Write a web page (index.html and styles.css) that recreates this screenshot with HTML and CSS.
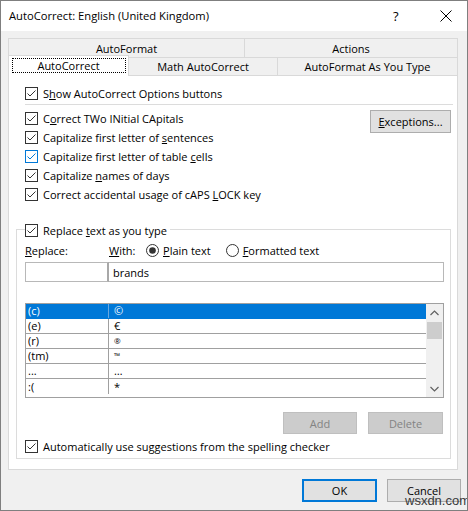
FILE: index.html
```html
<!DOCTYPE html>
<html>
<head>
<meta charset="utf-8">
<link rel="stylesheet" href="styles.css">
</head>
<body>
<div class="window">
  <div class="titlebar">
    <span class="title">AutoCorrect: English (United Kingdom)</span>
    <span class="help">?</span>
    <svg class="close" width="12" height="12" viewBox="0 0 12 12"><path d="M0.5 0.5 L11.5 11.5 M11.5 0.5 L0.5 11.5" stroke="#000" stroke-width="1" fill="none"/></svg>
  </div>
  <div class="client">
    <div class="tabrow r1">
      <div class="tab t-af">AutoFormat</div>
      <div class="tab t-act">Actions</div>
    </div>
    <div class="tabrow r2">
      <div class="tab sel t-ac"><span class="focus">AutoCorrect</span></div>
      <div class="tab t-math">Math AutoCorrect</div>
      <div class="tab t-afyt">AutoFormat As You Type</div>
    </div>
    <div class="panel">
      <div class="top">
        <label class="cbrow">
          <svg class="cb" viewBox="0 0 13 13"><rect x="0.5" y="0.5" width="12" height="12" fill="#fff" stroke="#333"/><path d="M2.5 6.5 L5 9 L10.5 3.5" fill="none" stroke="#333"/></svg>
          <span>S<u>h</u>ow AutoCorrect Options buttons</span>
        </label>
        <div class="sep"></div>
        <div class="opts">
          <div class="optlist">
            <label class="cbrow">
              <svg class="cb" viewBox="0 0 13 13"><rect x="0.5" y="0.5" width="12" height="12" fill="#fff" stroke="#333"/><path d="M2.5 6.5 L5 9 L10.5 3.5" fill="none" stroke="#333"/></svg>
              <span>C<u>o</u>rrect TWo INitial CApitals</span>
            </label>
            <label class="cbrow">
              <svg class="cb" viewBox="0 0 13 13"><rect x="0.5" y="0.5" width="12" height="12" fill="#fff" stroke="#333"/><path d="M2.5 6.5 L5 9 L10.5 3.5" fill="none" stroke="#333"/></svg>
              <span>Capitalize first letter of <u>s</u>entences</span>
            </label>
            <label class="cbrow">
              <svg class="cb" viewBox="0 0 13 13"><rect x="0.5" y="0.5" width="12" height="12" fill="#fff" stroke="#0078d7"/><path d="M2.5 6.5 L5 9 L10.5 3.5" fill="none" stroke="#0078d7"/></svg>
              <span>Capitalize first letter of table <u>c</u>ells</span>
            </label>
            <label class="cbrow">
              <svg class="cb" viewBox="0 0 13 13"><rect x="0.5" y="0.5" width="12" height="12" fill="#fff" stroke="#333"/><path d="M2.5 6.5 L5 9 L10.5 3.5" fill="none" stroke="#333"/></svg>
              <span>Capitalize <u>n</u>ames of days</span>
            </label>
            <label class="cbrow">
              <svg class="cb" viewBox="0 0 13 13"><rect x="0.5" y="0.5" width="12" height="12" fill="#fff" stroke="#333"/><path d="M2.5 6.5 L5 9 L10.5 3.5" fill="none" stroke="#333"/></svg>
              <span>Correct accidental usage of cAPS <u>L</u>OCK key</span>
            </label>
          </div>
          <button class="btn exc"><u>E</u>xceptions...</button>
        </div>
      </div>
      <div class="group">
        <div class="legend">
          <svg class="cb" viewBox="0 0 13 13"><rect x="0.5" y="0.5" width="12" height="12" fill="#fff" stroke="#333"/><path d="M2.5 6.5 L5 9 L10.5 3.5" fill="none" stroke="#333"/></svg>
          <span>Replace <u>t</u>ext as you type</span>
        </div>
        <div class="labels">
          <span class="lbl-rep"><u>R</u>eplace:</span>
          <span class="lbl-with"><u>W</u>ith:</span>
          <svg class="radio" viewBox="0 0 13 13"><circle cx="6.5" cy="6.5" r="6" fill="#fff" stroke="#333"/><circle cx="6.5" cy="6.5" r="3.3" fill="#333"/></svg>
          <span class="rlabel"><u>P</u>lain text</span>
          <svg class="radio r2" viewBox="0 0 13 13"><circle cx="6.5" cy="6.5" r="6" fill="#fff" stroke="#333"/></svg>
          <span class="rlabel"><u>F</u>ormatted text</span>
        </div>
        <div class="inputs">
          <div class="inp inp-rep"></div>
          <div class="inp inp-with">brands</div>
        </div>
        <div class="list">
          <div class="rows">
            <div class="row selrow"><span class="k">(c)</span><span class="v">©</span></div>
            <div class="row"><span class="k">(e)</span><span class="v">€</span></div>
            <div class="row"><span class="k">(r)</span><span class="v small">®</span></div>
            <div class="row"><span class="k">(tm)</span><span class="v small">™</span></div>
            <div class="row"><span class="k">...</span><span class="v">…</span></div>
            <div class="row"><span class="k">:(</span><span class="v">*</span></div>
          </div>
          <div class="scroll">
            <div class="arrow"><svg width="9" height="6" viewBox="0 0 9 6"><path d="M0.5 5 L4.5 1 L8.5 5" fill="none" stroke="#606060" stroke-width="1.2"/></svg></div>
            <div class="thumb"></div>
            <div class="track"></div>
            <div class="arrow"><svg width="9" height="6" viewBox="0 0 9 6"><path d="M0.5 1 L4.5 5 L8.5 1" fill="none" stroke="#606060" stroke-width="1.2"/></svg></div>
          </div>
        </div>
        <div class="actions">
          <button class="btn dis add">Add</button>
          <button class="btn dis del">Delete</button>
        </div>
        <label class="cbrow auto">
          <svg class="cb" viewBox="0 0 13 13"><rect x="0.5" y="0.5" width="12" height="12" fill="#fff" stroke="#333"/><path d="M2.5 6.5 L5 9 L10.5 3.5" fill="none" stroke="#333"/></svg>
          <span>Automatically use su<u>g</u>gestions from the spelling checker</span>
        </label>
      </div>
    </div>
    <div class="footer">
      <button class="btn ok">OK</button>
      <button class="btn cancel">Cancel</button>
    </div>
  </div>
  <span class="watermark">wsxdn.com</span>
</div>
</body>
</html>
```
FILE: styles.css
```css
* { box-sizing: border-box; }
html, body { margin: 0; padding: 0; }
body {
  background: #f0f0f0;
  font-family: "Open Sans", "Noto Sans", sans-serif;
  font-size: 11px;
  color: #000;
}
u { text-decoration: underline; text-underline-offset: 1px; }
.window {
  position: relative;
  width: 468px;
  height: 511px;
  border: 1px solid #7f7f7f;
  background: #f0f0f0;
  overflow: hidden;
}
.titlebar {
  height: 30px;
  background: #fff;
  display: flex;
  align-items: center;
  padding-left: 8px;
}
.title { font-size: 11.2px; flex: 1; padding-bottom: 1px; }
.help { font-size: 13px; width: 12px; margin-right: 35px; }
.close { margin-right: 15px; }
.client {
  padding: 7px 0 0 7px;
}
.tabrow { display: flex; width: 450px; }
.tab {
  display: flex;
  align-items: center;
  justify-content: center;
  background: #f0f0f0;
  border: 1px solid #d9d9d9;
  border-bottom: none;
}
.r1 .tab { height: 19px; }
.t-af { width: 237px; }
.t-act { width: 214px; margin-left: -1px; }
.r2 { align-items: flex-end; height: 18px; }
.r2 .tab { height: 18px; }
.t-ac { width: 121px; }
.t-math { width: 150px; margin-left: -1px; }
.t-afyt { width: 181px; margin-left: -1px; }
.tab.sel {
  position: relative;
  z-index: 1;
  background: #fff;
  height: 21px;
  margin-top: -2px;
  margin-bottom: -1px;
  align-items: flex-start;
  padding-top: 2px;
}
.focus {
  display: block;
  width: 114px;
  height: 15px;
  border: 1px dotted #000;
  text-align: center;
  line-height: 13px;
}
.panel {
  width: 450px;
  height: 395px;
  background: #fff;
  border: 1px solid #d9d9d9;
  padding-top: 8px;
}
.top { padding: 0 4px 0 16px; }
.cbrow {
  display: flex;
  align-items: center;
  height: 19px;
  gap: 5px;
}
.cb { width: 13px; height: 13px; flex: none; }
.sep { height: 1px; background: #dcdcdc; margin: 1px 0 4px 0; }
.opts { display: flex; justify-content: space-between; align-items: flex-start; }
.btn {
  font-family: inherit;
  font-size: 11px;
  color: #000;
  background: #e1e1e1;
  border: 1px solid #adadad;
  padding: 0;
  margin: 0;
}
.exc { width: 81px; height: 23px; margin-top: 1px; margin-right: 2px; }
.group {
  margin: 25px 0 0 7px;
  width: 435px;
  height: 230px;
  border: 1px solid #dcdcdc;
  padding: 0 0 0 8px;
}
.legend {
  display: flex;
  width: max-content;
  align-items: center;
  gap: 5px;
  height: 19px;
  margin-top: -9px;
  background: #fff;
  padding-right: 3px;
}
.labels {
  display: flex;
  align-items: center;
  height: 21px;
}
.lbl-rep { width: 84px; }
.lbl-with { width: 37px; }
.radio { width: 13px; height: 13px; flex: none; margin-right: 4px; }
.radio.r2 { margin-left: 0; }
.rlabel { margin-right: 15px; }
.inputs { display: flex; margin-top: 1px; }
.inp {
  height: 20px;
  border: 1px solid #b8b8b8;
  display: flex;
  align-items: center;
  padding-left: 4px;
}
.inp-rep { width: 84px; border-right: 2px solid #a8a8a8; }
.inp-with { width: 335px; border-left: none; }
.list {
  margin-top: 21px;
  width: 419px;
  height: 95px;
  border: 1px solid #a0a0a0;
  display: flex;
}
.rows { flex: 1; }
.row {
  display: flex;
  height: 15px;
  border-bottom: 1px solid #a0a0a0;
  align-items: center;
  line-height: 14px;
}
.row:last-child { border-bottom: none; }
.k { width: 83px; padding-left: 2px; border-right: 1px solid #a0a0a0; height: 100%; display: flex; align-items: center; }
.v { padding-left: 5px; }
.v.small { font-size: 8px; }
.selrow { background: #0078d7; color: #fff; border-bottom-color: #0078d7; }
.selrow .k { border-right-color: #6aa8e0; }
.scroll {
  width: 17px;
  background: #f0f0f0;
  display: flex;
  flex-direction: column;
}
.arrow { height: 17px; display: flex; align-items: center; justify-content: center; }
.thumb { height: 17px; background: #cdcdcd; margin: 1px 1px 0 1px; }
.track { flex: 1; }
.actions {
  display: flex;
  justify-content: flex-end;
  gap: 11px;
  margin-top: 14px;
  width: 418px;
}
.dis { background: #cccccc; border-color: #bfbfbf; color: #838383; height: 22px; }
.add { width: 74px; }
.del { width: 75px; }
.auto { margin-top: 3px; }
.footer {
  display: flex;
  justify-content: flex-end;
  gap: 10px;
  width: 453px;
  margin-top: 9px;
}
.ok { width: 75px; height: 23px; border: 2px solid #0078d7; }
.cancel { width: 74px; height: 23px; }
.watermark {
  position: absolute;
  left: 404px;
  top: 492px;
  font-family: "Liberation Sans", Arial, sans-serif;
  font-size: 13px;
  color: #3a3a3a;
}
```
